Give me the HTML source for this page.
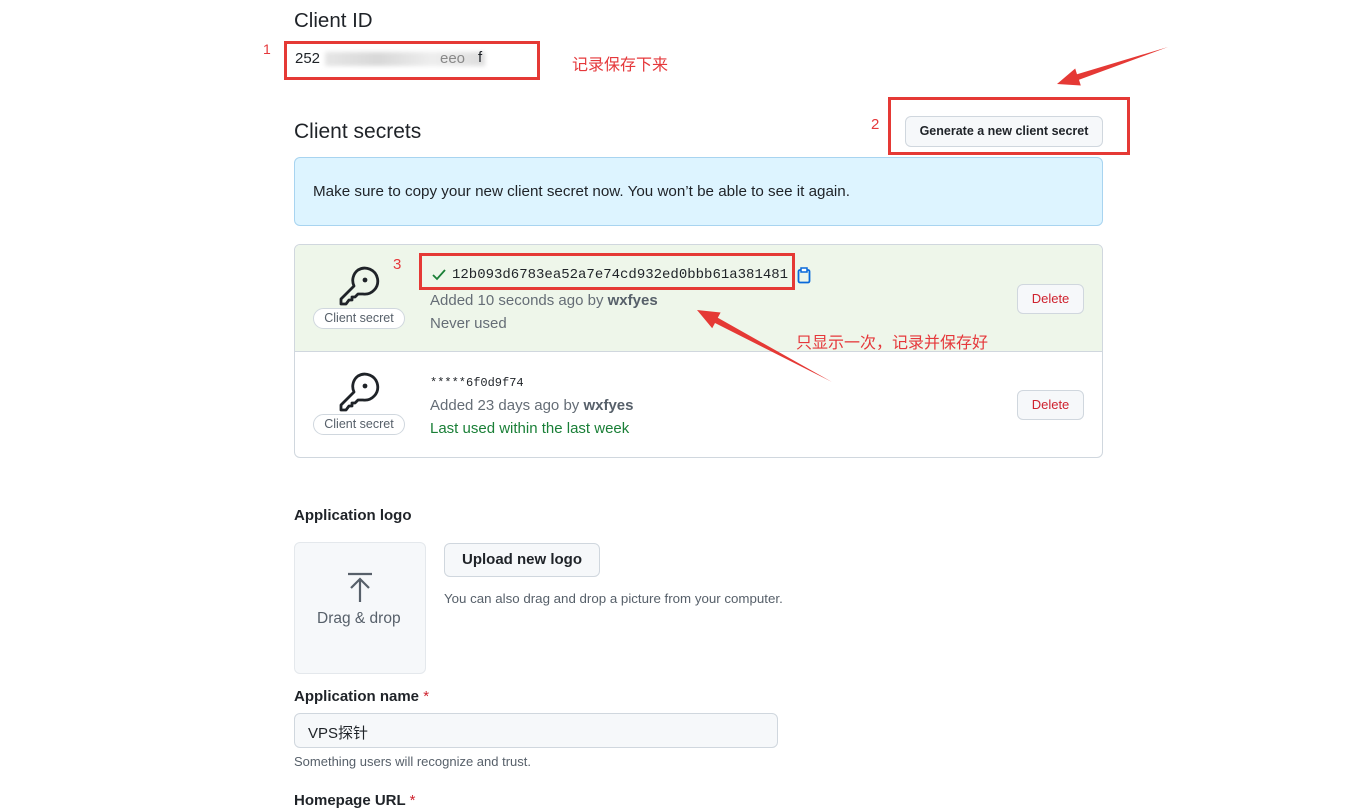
<!DOCTYPE html>
<html><head><meta charset="utf-8"><style>
*{box-sizing:border-box;margin:0;padding:0}
body{width:1351px;height:808px;background:#fff;position:relative;overflow:hidden;font-family:"Liberation Sans","Noto Sans CJK SC",sans-serif;color:#1f2328}
.a{position:absolute;white-space:nowrap}
.red{color:#e5383b}
.rbox{position:absolute;border:3px solid #e53935}
.btn{position:absolute;background:#f6f8fa;border:1px solid #d0d7de;border-radius:6px;font-size:12px;font-weight:bold;text-align:center}
.mono{font-family:"Liberation Mono",monospace}
.badge{position:absolute;border:1px solid #d0d7de;border-radius:12px;font-size:12.5px;color:#57606a;background:#fff;width:92px;height:21px;line-height:19px;text-align:center}
.muted{color:#656d76;font-size:15px}
</style></head><body>
<div class="a" style="left:294px;top:9px;font-size:20.5px">Client ID</div>
<div class="a red" style="left:263px;top:41px;font-size:14px">1</div>
<div class="rbox" style="left:284px;top:41px;width:256px;height:39px"></div>
<div class="a" style="left:295px;top:50px;font-size:15px">252</div>
<div class="a" style="left:325px;top:52px;width:160px;height:14px;background:linear-gradient(90deg,#e6e6e6,#d8d8d8,#eee,#ddd);filter:blur(2px)"></div>
<div class="a" style="left:440px;top:50px;font-size:15px;color:#888">eeo</div>
<div class="a" style="left:478px;top:49px;font-size:15px">f</div>
<div class="a red" style="left:572px;top:51px;font-size:16px">记录保存下来</div>

<div class="a" style="left:294px;top:120px;font-size:21px">Client secrets</div>
<div class="a red" style="left:871px;top:116px;font-size:15px">2</div>
<div class="rbox" style="left:888px;top:97px;width:242px;height:58px"></div>
<div class="btn" style="left:905px;top:116px;width:198px;height:31px;line-height:29px;font-size:12.5px">Generate a new client secret</div>

<div class="a" style="left:294px;top:157px;width:809px;height:69px;background:#ddf4ff;border:1px solid #a8d4f0;border-radius:6px"></div>
<div class="a" style="left:313px;top:183px;font-size:15.2px">Make sure to copy your new client secret now. You won’t be able to see it again.</div>

<div class="a" style="left:294px;top:244px;width:809px;height:214px;border:1px solid #d0d7de;border-radius:6px;overflow:hidden">
 <div style="height:107px;background:#eef6ea;border-bottom:1px solid #d0d7de"></div>
</div>
<svg class="a" style="left:338px;top:266px" width="42" height="40" viewBox="0 0 42 40"><g fill="none" stroke="#1f2328" stroke-width="2.8" stroke-linejoin="round"><path d="M20 4a13 13 0 1 1 5 24l-5 0-3 3-3 0 0 3-3 0-3 4-5 0 0-5 13-13a13 13 0 0 1 4-16z"/></g><circle cx="27" cy="14" r="2.4" fill="#1f2328"/></svg>
<svg class="a" style="left:338px;top:372px" width="42" height="40" viewBox="0 0 42 40"><g fill="none" stroke="#1f2328" stroke-width="2.8" stroke-linejoin="round"><path d="M20 4a13 13 0 1 1 5 24l-5 0-3 3-3 0 0 3-3 0-3 4-5 0 0-5 13-13a13 13 0 0 1 4-16z"/></g><circle cx="27" cy="14" r="2.4" fill="#1f2328"/></svg>
<div class="badge" style="left:313px;top:308px">Client secret</div>
<div class="badge" style="left:313px;top:414px">Client secret</div>

<div class="a red" style="left:393px;top:256px;font-size:15px">3</div>
<div class="rbox" style="left:419px;top:253px;width:376px;height:37px"></div>
<svg class="a" style="left:432px;top:269px" width="14" height="12" viewBox="0 0 14 12"><path d="M1 6l4 4 8-9" fill="none" stroke="#1a7f37" stroke-width="1.8"/></svg>
<div class="a mono" style="left:452px;top:267px;font-size:14px">12b093d6783ea52a7e74cd932ed0bbb61a381481</div>
<svg class="a" style="left:797px;top:267px" width="14" height="17" viewBox="0 0 14 17"><rect x="1.5" y="3" width="11" height="12.5" rx="1.5" fill="none" stroke="#0969da" stroke-width="1.8"/><rect x="4" y="1" width="6" height="4" fill="#fff" stroke="#0969da" stroke-width="1.5"/></svg>
<div class="a muted" style="left:430px;top:292px">Added 10 seconds ago by <b style="color:#57606a">wxfyes</b></div>
<div class="a muted" style="left:430px;top:315px">Never used</div>
<div class="btn" style="left:1017px;top:284px;width:67px;height:30px;line-height:28px;color:#cf222e;font-weight:normal;font-size:13px">Delete</div>
<div class="a red" style="left:796px;top:329px;font-size:16px">只显示一次，记录并保存好</div>

<div class="a mono" style="left:430px;top:376px;font-size:12px">*****6f0d9f74</div>
<div class="a muted" style="left:430px;top:397px">Added 23 days ago by <b style="color:#57606a">wxfyes</b></div>
<div class="a" style="left:430px;top:420px;font-size:15px;color:#1a7f37">Last used within the last week</div>
<div class="btn" style="left:1017px;top:390px;width:67px;height:30px;line-height:28px;color:#cf222e;font-weight:normal;font-size:13px">Delete</div>

<svg class="a" style="left:0;top:0" width="1351" height="808"><polygon points="1168,47 1077,74.2 1075.2,68.5 1057,84 1080.8,85.5 1079,79.8" fill="#e53935"/><polygon points="832,382 717.8,317.8 720.6,312.5 697,310 712.2,328.3 715,323" fill="#e53935"/></svg>

<div class="a" style="left:294px;top:507px;font-size:15px;font-weight:bold">Application logo</div>
<div class="a" style="left:294px;top:542px;width:132px;height:132px;background:#f6f8fa;border:1px solid #e4e8ec;border-radius:6px"></div>
<svg class="a" style="left:346px;top:572px" width="28" height="30" viewBox="0 0 28 30"><path d="M2 2h24M14 30V8M5 16l9-9 9 9" fill="none" stroke="#57606a" stroke-width="2.2"/></svg>
<div class="a" style="left:317px;top:610px;font-size:15.5px;color:#57606a">Drag &amp; drop</div>
<div class="btn" style="left:444px;top:543px;width:156px;height:34px;line-height:32px;font-size:15px">Upload new logo</div>
<div class="a" style="left:444px;top:591px;font-size:13.3px;color:#57606a">You can also drag and drop a picture from your computer.</div>

<div class="a" style="left:294px;top:688px;font-size:15px;font-weight:bold">Application name <span style="color:#cf222e;font-weight:normal">*</span></div>
<div class="a" style="left:294px;top:713px;width:484px;height:35px;background:#f6f8fa;border:1px solid #d0d7de;border-radius:6px"></div>
<div class="a" style="left:308px;top:722px;font-size:15px">VPS探针</div>
<div class="a" style="left:294px;top:754px;font-size:13px;color:#57606a">Something users will recognize and trust.</div>
<div class="a" style="left:294px;top:792px;font-size:15px;font-weight:bold">Homepage URL <span style="color:#cf222e;font-weight:normal">*</span></div>
</body></html>
